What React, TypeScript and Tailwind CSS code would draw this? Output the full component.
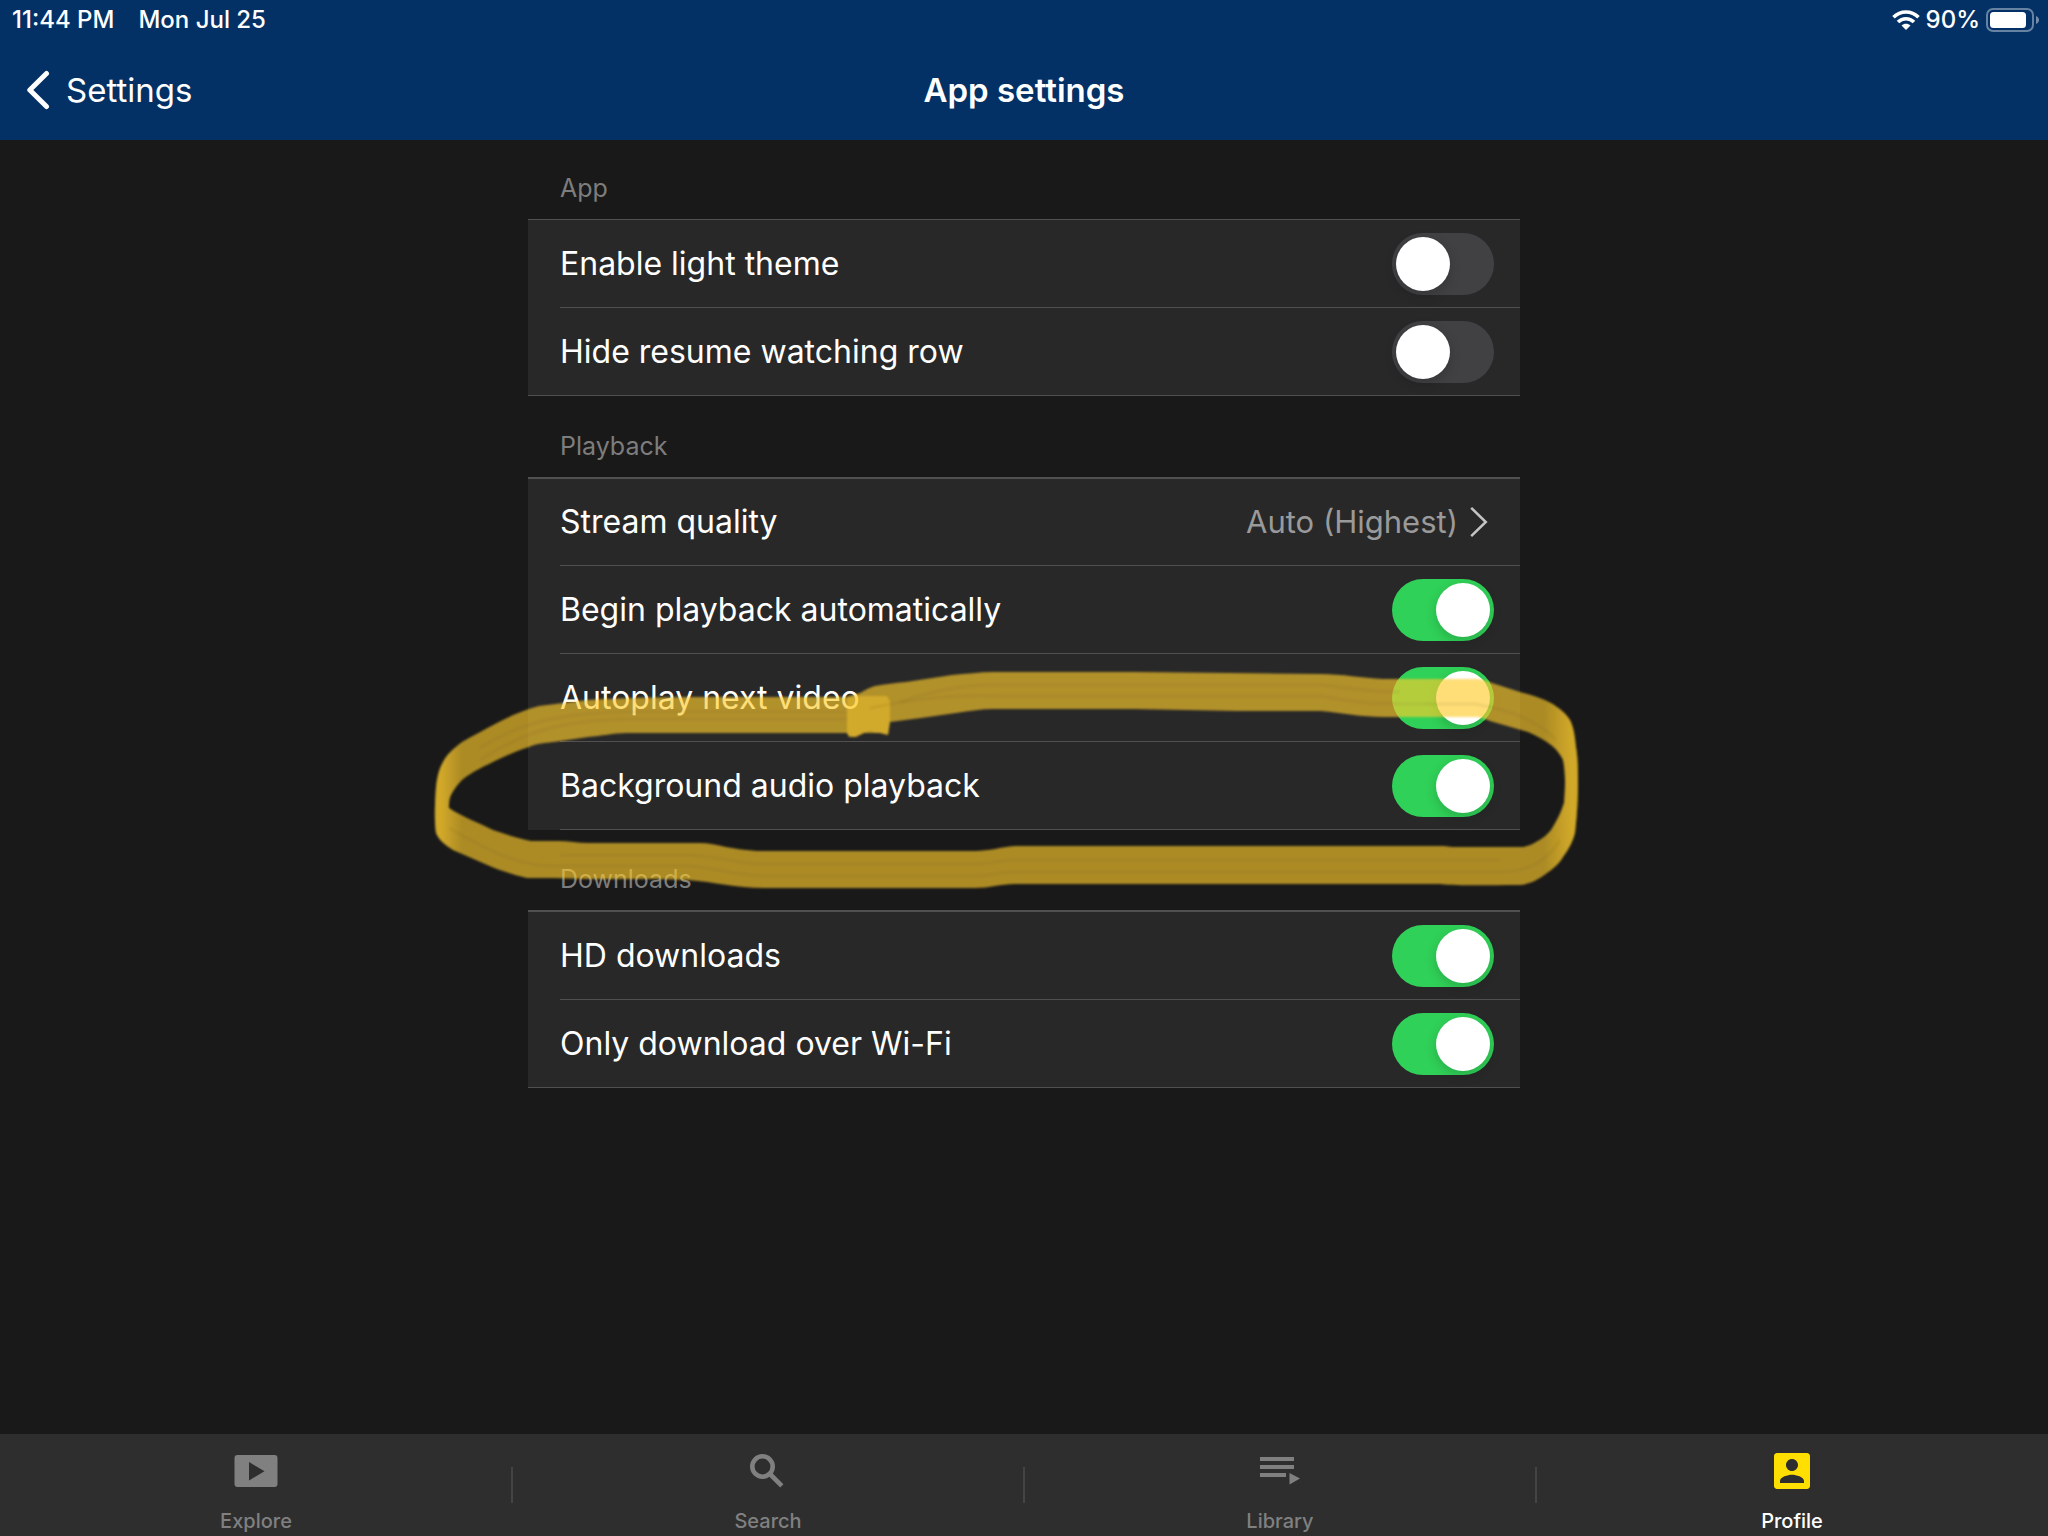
import { useState } from 'react'
import type { ReactNode } from 'react'

type ToggleRowProps = {
  label: string
  initial?: boolean
  last?: boolean
}

function ToggleRow({ label, initial = false, last = false }: ToggleRowProps) {
  const [on, setOn] = useState(initial)

  return (
    <label
      className={
        last
          ? 'flex h-[87px] cursor-pointer bg-[#282828] pl-8'
          : 'flex h-[88px] cursor-pointer bg-[#282828] pl-8'
      }
    >
      <span
        className={
          last
            ? 'flex flex-1 items-center justify-between pr-[26px]'
            : 'flex flex-1 items-center justify-between border-b border-[#505050] pr-[26px]'
        }
      >
        <span>{label}</span>
        <input
          type="checkbox"
          role="switch"
          checked={on}
          onChange={(e) => setOn(e.target.checked)}
          className="h-[62px] w-[102px] shrink-0 cursor-pointer appearance-none rounded-full bg-[#414144] p-1 before:block before:size-[54px] before:rounded-full before:bg-white before:shadow-[0_4px_12px_rgba(0,0,0,0.18)] checked:bg-[#30d158] checked:before:translate-x-10"
        />
      </span>
    </label>
  )
}

function SectionTitle({ children }: { children: ReactNode }) {
  return <h2 className="px-8 pb-[15px] text-[25px] leading-8 text-[#7d7d7d]">{children}</h2>
}

function MarkerRing() {
  return (
    <svg
      className="pointer-events-none absolute -left-24 top-[272px] z-10 h-[224px] w-[1150px]"
      viewBox="432 668 1150 224"
      fill="none"
      aria-hidden="true"
    >
      <defs>
        <filter id="soft" x="-2%" y="-5%" width="104%" height="110%">
          <feGaussianBlur stdDeviation="1" />
        </filter>
        <linearGradient id="leftSide" gradientUnits="userSpaceOnUse" x1="436" y1="0" x2="462" y2="0">
          <stop offset="0.2" stopColor="#ffcc2c" stopOpacity="0.45" />
          <stop offset="1" stopColor="#ffcc2c" stopOpacity="0" />
        </linearGradient>
        <linearGradient id="rightSide" gradientUnits="userSpaceOnUse" x1="1578" y1="0" x2="1544" y2="0">
          <stop offset="0.2" stopColor="#ffcc2c" stopOpacity="0.45" />
          <stop offset="1" stopColor="#ffcc2c" stopOpacity="0" />
        </linearGradient>
        <clipPath id="ring">
          <path
            clipRule="evenodd"
            d="M846 697H703C660 697 620 698 588 700C570 702 556 704 539 706C524 710 510 716 497 723C484 730 472 736 462 742C453 749 447 754 443 762C438 771 437 779 436 787C435 800 434 820 436 833C439 840 445 845 453 850L485 864C499 870 513 875 527 878H554C600 880 650 878 688 880C715 882 735 888 764 888H975C990 888 1000 884 1015 884H1440C1450 886 1490 885 1520 885C1531 884 1539 879 1547 873C1554 868 1559 864 1563 857C1569 849 1573 841 1575 833C1577 815 1578 800 1578 783C1578 770 1578 758 1576 747C1575 737 1574 728 1570 720C1565 712 1559 708 1551 703C1542 698 1532 695 1520 692L1492 683C1487 681 1482 679 1475 679H1383C1362 678 1342 674 1321 674L1230 673L1134 672H994C979 672 966 674 952 675L906 682C895 683 885 684 875 686C868 688 864 691 860 693ZM890 722L921 718L956 713C970 711 982 709 994 709H1134L1237 711H1321C1342 713 1362 717 1383 717H1475C1481 717 1485 719 1490 721L1528 732C1537 736 1545 740 1551 745C1557 750 1560 754 1563 760C1566 775 1565 790 1564 803C1560 815 1556 822 1551 830C1547 835 1542 839 1536 842C1531 845 1526 847 1520 847H1452L1444 846H1015C1000 847 990 851 975 851H757C746 850 736 849 726 847C717 845 709 843 699 843H588C578 843 568 841 558 841H531C517 838 505 834 493 830C478 822 462 817 449 808C449 803 449 799 451 795C454 789 458 784 462 780C473 771 485 766 497 760C508 755 518 750 529 747C537 743 546 743 554 742L588 737C602 736 613 733 627 733H847L849 737H856L864 733H880L888 735Z"
          />
        </clipPath>
      </defs>
      <g filter="url(#soft)">
        <g clipPath="url(#ring)">
          <rect x="432" y="668" width="1150" height="224" fill="#ffcc2c" fillOpacity="0.64" />
          <path d="M847 698L856 696H887L890 701V733L886 736L870 731L854 737L847 735Z" fill="#ffcc2c" fillOpacity="0.4" />
          <path d="M432 720H480V870H432Z" fill="url(#leftSide)" />
          <path d="M1536 690H1582V885H1536Z" fill="url(#rightSide)" />
          {/* bristle streaks */}
          <g stroke="#6b5510" strokeOpacity="0.1" strokeWidth="3">
            <path d="M480 760C520 735 550 722 620 719H846" />
            <path d="M480 748C520 722 560 714 620 712H846" />
            <path d="M870 708C930 696 960 695 1000 696H1321C1350 702 1370 704 1400 704H1475C1510 710 1540 722 1556 740" />
            <path d="M900 702C940 688 970 684 1000 685H1321C1350 688 1370 692 1400 692" />
            <path d="M449 828C490 852 520 866 554 866H690C720 869 740 876 764 876H975C990 876 1000 872 1015 872H1500C1530 872 1548 860 1560 840" />
            <path d="M560 855H690C720 857 740 864 764 864H975C990 864 1000 860 1015 860H1500" />
          </g>
        </g>
      </g>
    </svg>
  )
}

function ExploreIcon() {
  return (
    <svg className="size-12" viewBox="0 0 48 48" fill="currentColor" aria-hidden="true">
      <path
        fillRule="evenodd"
        d="M5.500 8H42.500A3 3 0 0 1 45.500 11V37A3 3 0 0 1 42.500 40H5.500A3 3 0 0 1 2.500 37V11A3 3 0 0 1 5.500 8ZM17 15V33.500L32.500 24.200Z"
      />
    </svg>
  )
}

function SearchIcon() {
  return (
    <svg className="size-12" viewBox="0 0 48 48" fill="none" stroke="currentColor" strokeWidth="4.600" aria-hidden="true">
      <circle cx="18.500" cy="19.500" r="10.200" />
      <path d="M25.500 26.500L37.800 38.800" />
    </svg>
  )
}

function LibraryIcon() {
  return (
    <svg className="size-12" viewBox="0 0 48 48" fill="currentColor" aria-hidden="true">
      <path d="M4 10h34v4H4zM4 18h34v4H4zM4 26h26v4H4zM33.500 26v11.500l10.500-6z" />
    </svg>
  )
}

function ProfileIcon() {
  return (
    <svg className="size-12 text-[#ffdf00]" viewBox="0 0 24 24" fill="currentColor" aria-hidden="true">
      <path d="M3 4.500v15c0 .8.700 1.500 1.500 1.500h15c.8 0 1.500-.7 1.500-1.500v-15c0-.8-.7-1.500-1.500-1.500h-15C3.700 3 3 3.700 3 4.500zM15 9c0 1.660-1.340 3-3 3s-3-1.340-3-3 1.340-3 3-3 3 1.340 3 3zm-9 8c0-2 4-3.100 6-3.100s6 1.100 6 3.100v1H6v-1z" />
    </svg>
  )
}

const tabs = [
  { name: 'Explore', icon: <ExploreIcon /> },
  { name: 'Search', icon: <SearchIcon /> },
  { name: 'Library', icon: <LibraryIcon /> },
  { name: 'Profile', icon: <ProfileIcon />, active: true },
]

export default function App() {
  return (
    <div className="flex min-h-screen flex-col bg-[#191919] font-['Inter',sans-serif] text-[32px] leading-10 text-white">
      <header className="bg-[#033166]">
        <div className="flex h-10 items-center justify-between pl-3 pr-2 text-2xl font-medium leading-7">
          <div className="flex gap-6">
            <span>11:44 PM</span>
            <span>Mon Jul 25</span>
          </div>
          <div className="flex items-center gap-1.5">
            <svg className="h-5 w-7" viewBox="0 0 28 20" fill="none" stroke="currentColor" strokeWidth="3.600" aria-hidden="true">
              <path d="M1.500 7.200C8.500 .2 19.500 .2 26.500 7.200" />
              <path d="M6 12C10.500 7.600 17.500 7.600 22 12" />
              <path d="M9.500 15.500C12 13 16 13 18.500 15.500L14 20Z" fill="currentColor" stroke="none" />
            </svg>
            <span>90%</span>
            <svg className="h-6 w-[54px]" viewBox="0 0 54 24" fill="none" aria-hidden="true">
              <rect x="1" y="1" width="46" height="22" rx="6" stroke="#fff" strokeOpacity="0.4" strokeWidth="2" />
              <rect x="4" y="4" width="36" height="16" rx="3.500" fill="#fff" />
              <path d="M50 8C54 9.500 54 14.500 50 16Z" fill="#fff" fillOpacity="0.45" />
            </svg>
          </div>
        </div>
        <nav className="grid h-[100px] grid-cols-3 items-center text-[33px]">
          <a href="#settings" className="flex items-center gap-4 pl-[26px]">
            <svg className="h-10 w-6" viewBox="0 0 24 40" fill="none" stroke="currentColor" strokeWidth="5" strokeLinecap="round" strokeLinejoin="round" aria-hidden="true">
              <path d="M20.500 3.500L3.800 20L20.500 36.500" />
            </svg>
            <span>Settings</span>
          </a>
          <h1 className="text-center font-semibold">App settings</h1>
        </nav>
      </header>

      <main className="mx-auto w-full max-w-[992px] flex-1 pb-10">
        <section className="pt-8">
          <SectionTitle>App</SectionTitle>
          <div className="border-y border-[#505050]">
            <ToggleRow label="Enable light theme" />
            <ToggleRow label="Hide resume watching row" last />
          </div>
        </section>

        <section className="relative pt-[34px]">
          <SectionTitle>Playback</SectionTitle>
          <div className="border-t-2 border-[#505050]">
            <button type="button" className="flex h-[87px] w-full cursor-pointer bg-[#282828] pl-8 text-left">
              <span className="flex h-full flex-1 items-center justify-between border-b border-[#505050] pr-8">
                <span>Stream quality</span>
                <span className="flex items-center gap-3 text-[31px] text-[#9a9a9a]">
                  Auto (Highest)
                  <svg className="h-8 w-[18px] text-[#c4c4c4]" viewBox="0 0 18 32" fill="none" stroke="currentColor" strokeWidth="2.500" aria-hidden="true">
                    <path d="M1.200 1.800L15.800 16L1.200 30.200" />
                  </svg>
                </span>
              </span>
            </button>
            <ToggleRow label="Begin playback automatically" initial />
            <ToggleRow label="Autoplay next video" initial />
            <ToggleRow label="Background audio playback" initial />
          </div>
          <MarkerRing />
        </section>

        <section className="pt-[33px]">
          <SectionTitle>Downloads</SectionTitle>
          <div className="border-b border-t-2 border-[#505050]">
            <ToggleRow label="HD downloads" initial />
            <ToggleRow label="Only download over Wi-Fi" initial last />
          </div>
        </section>
      </main>

      <nav className="grid h-[102px] grid-cols-4 bg-[#2e2e2e] text-xl font-medium leading-6">
        {tabs.map((tab, i) => (
          <div key={tab.name} className="flex items-center">
            <a
              href={'#' + tab.name.toLowerCase()}
              className={
                tab.active
                  ? 'flex flex-1 flex-col items-center gap-3.5 pt-[10px] text-white'
                  : 'flex flex-1 flex-col items-center gap-3.5 pt-[10px] text-[#808080]'
              }
            >
              {tab.icon}
              <span>{tab.name}</span>
            </a>
            {i < tabs.length - 1 && <span className="-mx-px h-9 w-0.5 bg-[#444444]" />}
          </div>
        ))}
      </nav>
    </div>
  )
}
